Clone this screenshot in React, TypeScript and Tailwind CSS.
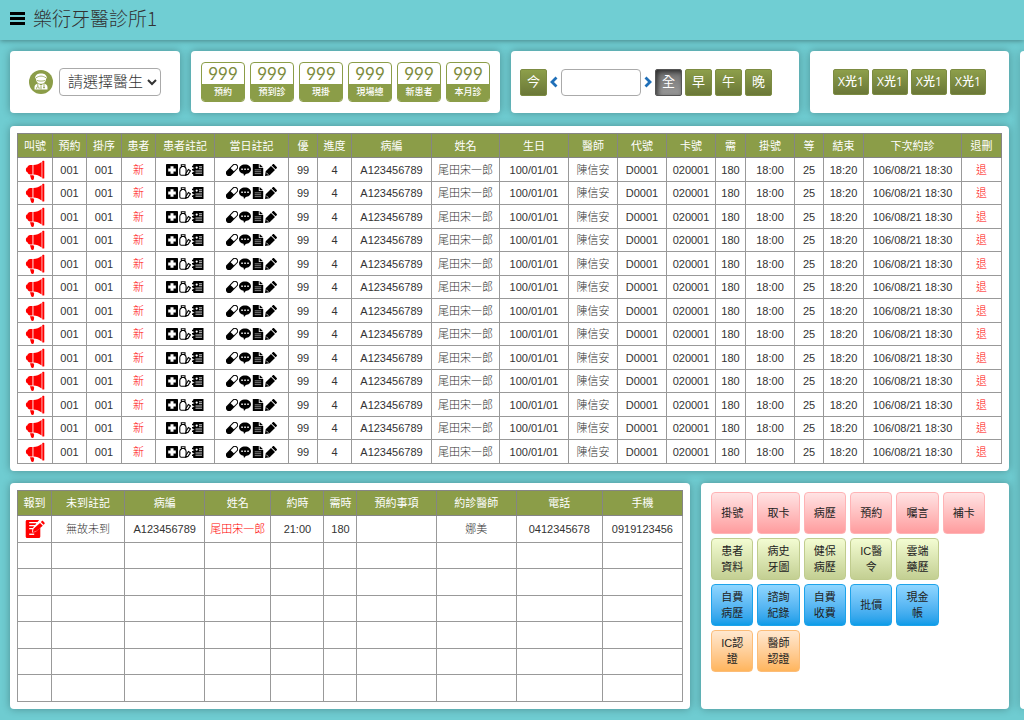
import { useState } from 'react';
import type { ReactNode } from 'react';

const stats = ['預約', '預到診', '現掛', '現場總', '新患者', '本月診'];
const periods = ['全', '早', '午', '晚'];
const xrays = [1, 2, 3, 4];

const queueColumns = [
  { label: '叫號', width: 'w-[35px]' },
  { label: '預約', width: 'w-[34px]' },
  { label: '掛序', width: 'w-[35px]' },
  { label: '患者', width: 'w-[34px]' },
  { label: '患者註記', width: 'w-[59px]' },
  { label: '當日註記', width: 'w-[74px]' },
  { label: '優', width: 'w-[29px]' },
  { label: '進度', width: 'w-[34px]' },
  { label: '病編', width: 'w-[80px]' },
  { label: '姓名', width: 'w-[68px]' },
  { label: '生日', width: 'w-[69px]' },
  { label: '醫師', width: 'w-[49px]' },
  { label: '代號', width: 'w-[49px]' },
  { label: '卡號', width: 'w-[49px]' },
  { label: '需', width: 'w-[30px]' },
  { label: '掛號', width: 'w-[49px]' },
  { label: '等', width: 'w-[29px]' },
  { label: '結束', width: 'w-[40px]' },
  { label: '下次約診', width: 'w-[98px]' },
  { label: '退刪', width: 'w-[40px]' },
];

const bookingColumns = [
  { label: '報到', width: 'w-[34px]' },
  { label: '未到註記', width: 'w-[73px]' },
  { label: '病編', width: 'w-[80px]' },
  { label: '姓名', width: 'w-[66px]' },
  { label: '約時', width: 'w-[53px]' },
  { label: '需時', width: 'w-[33px]' },
  { label: '預約事項', width: 'w-[79px]' },
  { label: '約診醫師', width: 'w-[80px]' },
  { label: '電話', width: 'w-[86px]' },
  { label: '手機', width: 'w-[80px]' },
];

const patient = {
  booking: '001',
  order: '001',
  priority: '99',
  progress: '4',
  chart: 'A123456789',
  name: '尾田宋一郎',
  birthday: '100/01/01',
  doctor: '陳信安',
  code: 'D0001',
  card: '020001',
  need: '180',
  registered: '18:00',
  wait: '25',
  end: '18:20',
  next: '106/08/21 18:30',
};

const queue = Array.from({ length: 13 }, (_, i) => ({ id: i, ...patient }));

const actionGroups = [
  {
    style: 'border-[#ffb3b5] bg-linear-to-b from-[#ffe3e4] to-[#ff9c9e]',
    items: ['掛號', '取卡', '病歷', '預約', '囑言', '補卡'],
  },
  {
    style: 'border-[#c0cc8e] bg-linear-to-b from-[#f3fcd2] to-[#c3cf92]',
    items: ['患者資料', '病史牙圖', '健保病歷', 'IC醫令', '雲端藥歷'],
  },
  {
    style: 'border-[#1ea3ea] bg-linear-to-b from-[#8fd6ff] to-[#0a9ce8]',
    items: ['自費病歷', '諮詢紀錄', '自費收費', '批價', '現金帳'],
  },
  {
    style: 'border-[#fcbd78] bg-linear-to-b from-[#ffe8d0] to-[#ffb55c]',
    items: ['IC認證', '醫師認證'],
  },
];

function Panel({ className = '', children }: { className?: string; children?: ReactNode }) {
  return <section className={`bg-white rounded shadow-[0_0_8px_rgba(0,0,0,0.3)] ${className}`}>{children}</section>;
}

function Icon({ className = 'size-3', box = 12, children }: { className?: string; box?: number; children: ReactNode }) {
  return (
    <svg viewBox={`0 0 ${box} ${box}`} className={`inline-block shrink-0 ${className}`} fill="currentColor" aria-hidden="true">
      {children}
    </svg>
  );
}

function MegaphoneIcon() {
  return (
    <Icon className="size-5" box={20}>
      <path d="M7.500 5v9.400H5.200C3.600 14.400 2.700 13.400 2.500 12.200 1.500 12 .9 11 .9 9.700s.6-2.300 1.600-2.500C2.700 6 3.600 5 5.200 5z" />
      <path d="M8.400 5c3.200 0 5.600-1 8.200-3v15.400c-2.600-2-5-3-8.200-3z" />
      <rect x="17.300" y=".8" width="2" height="17.800" rx="0.600" />
      <path d="M5 15.200h3.600v.9l.6.500-.4 2.400c-.2.700-.6 1-1.300 1s-1.200-.3-1.400-1z" />
    </Icon>
  );
}

function CheckInIcon() {
  return (
    <Icon className="size-5" box={20}>
      <path d="M2 1h12.200l-1.700 2H4.200v1.300h7.200L10.200 6H4.200v1.300h4.900L7.900 9H4.200v1.300h3.200L7 13.600l3.600-.5 4.700-4.500V17.500c0 .9-.6 1.500-1.500 1.500H2C1.300 19 .7 18.400.7 17.500v-15C.7 1.600 1.300 1 2 1z" />
      <path d="M15.800 3.100l.9-.9c.5-.5 1-.5 1.500 0l1.200 1.200c.5.500.5 1 0 1.500l-.9.900zM15 3.900l2.800 2.800-7 5.700-3 .6.700-3.200z" />
      <path d="M4.200 14.600h5v1.300h-5z" fill="#fff" />
    </Icon>
  );
}

function PatientNotes() {
  return (
    <div className="flex items-center justify-center gap-px">
      <Icon>
        <path fillRule="evenodd" d="M.8 0h10.400C11.700 0 12 .3 12 .8v10.400c0 .5-.3.800-.8.800H.8C.3 12 0 11.700 0 11.200V.8C0 .3.300 0 .8 0zM4.500 2.200v2.300H2.200v3h2.300v2.300h3V7.500h2.300v-3H7.500V2.200z" />
      </Icon>
      <Icon>
        <path d="M2.300.7h3.700v1.800H2.300zM2.700 2.700C1.500 3.300.8 4 .8 5.200v4.500c0 1 .5 1.600 1.500 1.600h3.300c1 0 1.500-.6 1.500-1.600V5.200c0-1.200-.6-1.900-1.700-2.500" fill="none" stroke="currentColor" strokeWidth="1.100" />
        <path d="M7.200 9l2.200-3.500 2 1.300-2.300 3.500-2.300 1z" fill="#fff" stroke="currentColor" strokeWidth="1.100" />
      </Icon>
      <Icon>
        <path d="M2 .1h9.500v11.800H2c-.6 0-.9-.3-.9-.9V1C1.100.4 1.400.1 2 .1z" />
        <path d="M7 2.800h3M7 4.700h3M3.500 7h6.500M3.500 9.200h6.500" stroke="#fff" strokeWidth=".8" />
        <circle cx="4.700" cy="3.600" r="1.100" fill="#fff" />
        <path d="M0 2.500h2.500M0 5.800h2.500M0 9.200h2.500" stroke="currentColor" strokeWidth="1.400" />
        <path d="M.4 4.100h1.800M.4 7.500h1.800" stroke="#fff" strokeWidth=".7" />
      </Icon>
    </div>
  );
}

function DayNotes() {
  return (
    <div className="flex items-center justify-center gap-px">
      <Icon>
        <g transform="rotate(-45 6 6)">
          <rect x="-1.300" y="2.800" width="14.600" height="6.400" rx="3.200" />
          <path d="M6.300 3.800h3.800a2.200 2.200 0 0 1 0 4.400H6.300z" fill="#fff" />
        </g>
      </Icon>
      <Icon>
        <path d="M6 .4c3.400 0 6 2.100 6 4.800S9.300 9.900 6.800 9.900L5 12 4.500 9.800C1.900 9.300 0 7.600 0 5.200 0 2.500 2.600.4 6 .4z" />
        <path d="M2.300 4.500h1.500V6H2.300zM5.300 4.500h1.500V6H5.300zM8.300 4.500h1.500V6H8.300z" fill="#fff" />
      </Icon>
      <Icon>
        <path d="M.8 0h6v4h4.400v8H.8z" />
        <path d="M7.600.1l3.500 3.200H7.600z" />
        <path d="M2.700 5.800h6.500M2.700 7.700h6.500M2.700 9.600h6.500" stroke="#fff" strokeWidth=".5" />
      </Icon>
      <Icon>
        <path d="M0 12l.7-4.700L6 2l4 4-5.300 5.300zM6.700 1.400L7.800.3c.4-.4.900-.4 1.300 0l2.600 2.600c.4.400.4.900 0 1.300l-1.100 1.100z" />
        <path d="M1.300 8.700l2 2" stroke="#fff" strokeWidth=".8" />
      </Icon>
    </div>
  );
}

function DoctorIcon() {
  return (
    <Icon className="size-6" box={24}>
      <circle cx="12" cy="12" r="12" fill="#8b9d48" />
      <path d="M6.200 8C6.200 5 8.800 3.600 12 3.600S17.800 5 17.800 8l-.8.800c0 3-2.200 5-5 5s-5-2-5-5z" fill="#fff" />
      <path d="M7 7.800c2-1.200 3.300-1.700 5-1.700s3 .5 5 1.700M8 10.500c2.300.8 5.700.8 8 0" fill="none" stroke="#8b9d48" strokeWidth=".8" />
      <path d="M5.500 19.600v-2.400c0-2 1.500-3.200 3.700-3.700l2.800 2 2.800-2c2.200.5 3.700 1.700 3.700 3.700v2.400z" fill="#fff" />
      <path d="M8.800 14v2.500M7.600 18.800v-.8c0-1.700 2.500-1.700 2.500 0v.8M12 15.800v3.600M15 14v2.500" fill="none" stroke="#8b9d48" strokeWidth=".8" />
      <circle cx="15" cy="17.400" r=".9" fill="#8b9d48" />
    </Icon>
  );
}

function Chevron({ d }: { d: string }) {
  return (
    <svg viewBox="0 0 8 12" className="w-2 h-3" fill="none" stroke="#1f6fb8" strokeWidth="2.800" aria-hidden="true">
      <path d={d} />
    </svg>
  );
}

function HeadRow({ columns, height }: { columns: { label: string; width: string }[]; height: string }) {
  return (
    <thead>
      <tr className={`bg-[#8b9d48] text-white ${height}`}>
        {columns.map((c) => (
          <th key={c.label} scope="col" className={`border border-[#858585] p-0 font-normal whitespace-nowrap ${c.width}`}>
            {c.label}
          </th>
        ))}
      </tr>
    </thead>
  );
}

function Cell({ className = '', children }: { className?: string; children?: ReactNode }) {
  return <td className={`border border-[#999] p-0 whitespace-nowrap ${className}`}>{children}</td>;
}

const greenButton = 'bg-linear-to-b from-[#8d9f4a] to-[#6b7838] border-[#7c8b42]';

export default function App() {
  const [period, setPeriod] = useState('全');
  const [date, setDate] = useState('');

  return (
    <div className="min-h-screen overflow-hidden bg-[#6fccd1] font-['Liberation_Sans','Noto_Sans_CJK_TC',sans-serif] text-[11px] leading-4 text-[#333]">
      <header className="flex h-10 items-center gap-2 bg-[#70ced3] px-[10px] pb-1 shadow-[0_1px_5px_rgba(0,0,0,0.35)]">
        <button type="button" aria-label="選單" className="flex w-[15px] flex-col gap-[2px]">
          <span className="h-[3px] bg-black" />
          <span className="h-[3px] bg-black" />
          <span className="h-[3px] bg-black" />
        </button>
        <h1 className="font-['Noto_Sans_CJK_TC',sans-serif] text-[19px] leading-6 font-light">樂衍牙醫診所1</h1>
      </header>

      <div className="flex gap-[11px] pt-[11px] pb-[11px] pl-[10px]">
        <main className="min-w-0 flex-1">
          {/* Top bar */}
          <div className="grid grid-cols-[170fr_309fr_288fr_199fr] gap-[11px]">
            <Panel className="flex h-[62px] items-center justify-center gap-[6px]">
              <DoctorIcon />
              <select
                aria-label="醫生"
                className="h-7 w-[102px] rounded border border-[#aaa] bg-white pb-1 pl-1 font-['Noto_Sans_CJK_TC',sans-serif] text-[15px] leading-5 font-light"
              >
                <option>請選擇醫生</option>
              </select>
            </Panel>

            <Panel className="flex h-[62px] items-center justify-center gap-[5px]">
              {stats.map((label) => (
                <div key={label} className="w-11 overflow-hidden rounded border border-[#8b9d48] text-center">
                  <div className="h-[21px] font-[Lato,sans-serif] text-[17px] leading-[22px] text-[#7c8b3c]">999</div>
                  <div className="h-[17px] bg-[#8b9d48] text-[9px] leading-[17px] font-medium text-white">{label}</div>
                </div>
              ))}
            </Panel>

            <Panel className="flex h-[62px] items-center gap-[3px] pl-[9px] text-[13px]">
              <button type="button" className={`size-[27px] rounded-xs border text-white ${greenButton}`}>
                今
              </button>
              <button type="button" aria-label="前一天">
                <Chevron d="M6.500 1.500 2 6l4.500 4.500" />
              </button>
              <input
                aria-label="日期"
                value={date}
                onChange={(e) => setDate(e.target.value)}
                className="h-[27px] w-20 rounded border border-[#aaa] px-1 text-xs"
              />
              <button type="button" aria-label="後一天">
                <Chevron d="M1.500 1.500 6 6l-4.500 4.500" />
              </button>
              {periods.map((p) => (
                <button
                  key={p}
                  type="button"
                  onClick={() => setPeriod(p)}
                  className={`size-[27px] rounded-xs border text-white ${
                    period === p
                      ? 'border-[#555] bg-linear-to-b from-[#707070] to-[#9a9a9a] shadow-[inset_2px_2px_5px_rgba(0,0,0,0.6)]'
                      : greenButton
                  }`}
                >
                  {p}
                </button>
              ))}
            </Panel>

            <Panel className="flex h-[62px] items-center justify-center gap-[3px] font-['Open_Sans','Noto_Sans_CJK_TC',sans-serif] text-xs font-medium">
              {xrays.map((x) => (
                <button key={x} type="button" className={`h-[26px] w-9 rounded-xs border text-white ${greenButton}`}>
                  X光1
                </button>
              ))}
            </Panel>
          </div>

          {/* Waiting list */}
          <Panel className="mt-[13px] p-[7px]">
            <table className="w-full table-fixed border-collapse text-center">
              <HeadRow columns={queueColumns} height="h-6" />
              <tbody>
                {queue.map((row) => (
                  <tr key={row.id} className="odd:h-6 even:h-[23px]">
                    <Cell>
                      <button type="button" aria-label="叫號" className="block mx-auto text-[#f00]">
                        <MegaphoneIcon />
                      </button>
                    </Cell>
                    <Cell>{row.booking}</Cell>
                    <Cell>{row.order}</Cell>
                    <Cell className="text-[#f00] font-light">新</Cell>
                    <Cell className="text-black">
                      <PatientNotes />
                    </Cell>
                    <Cell className="text-black">
                      <DayNotes />
                    </Cell>
                    <Cell>{row.priority}</Cell>
                    <Cell>{row.progress}</Cell>
                    <Cell>{row.chart}</Cell>
                    <Cell className="font-light">{row.name}</Cell>
                    <Cell>{row.birthday}</Cell>
                    <Cell className="font-light">{row.doctor}</Cell>
                    <Cell>{row.code}</Cell>
                    <Cell>{row.card}</Cell>
                    <Cell>{row.need}</Cell>
                    <Cell>{row.registered}</Cell>
                    <Cell>{row.wait}</Cell>
                    <Cell>{row.end}</Cell>
                    <Cell>{row.next}</Cell>
                    <Cell>
                      <button type="button" className="text-[#f00] font-light">
                        退
                      </button>
                    </Cell>
                  </tr>
                ))}
              </tbody>
            </table>
          </Panel>

          <div className="mt-3 grid grid-cols-[680fr_308fr] gap-[11px]">
            {/* Appointments */}
            <Panel className="p-[7px]">
              <table className="w-full table-fixed border-collapse text-center">
                <HeadRow columns={bookingColumns} height="h-[25px]" />
                <tbody>
                  <tr className="h-[27px]">
                    <Cell>
                      <button type="button" aria-label="報到" className="block mx-auto text-[#f00]">
                        <CheckInIcon />
                      </button>
                    </Cell>
                    <Cell className="font-light">無故未到</Cell>
                    <Cell>A123456789</Cell>
                    <Cell className="text-[#f00] font-light">尾田宋一郎</Cell>
                    <Cell>21:00</Cell>
                    <Cell>180</Cell>
                    <Cell />
                    <Cell className="font-light">娜美</Cell>
                    <Cell>0412345678</Cell>
                    <Cell>0919123456</Cell>
                  </tr>
                  {[1, 2, 3, 4, 5, 6].map((n) => (
                    <tr key={n} className="odd:h-[27px] even:h-[26px]">
                      {bookingColumns.map((c) => (
                        <Cell key={c.label} />
                      ))}
                    </tr>
                  ))}
                </tbody>
              </table>
            </Panel>

            {/* Shortcuts */}
            <Panel className="flex flex-col gap-1 px-[10px] py-[9px]">
              {actionGroups.map((group) => (
                <div key={group.style} className="grid w-[274px] grid-cols-6 gap-1">
                  {group.items.map((item) => (
                    <button
                      key={item}
                      type="button"
                      className={`h-[42px] rounded border px-[9px] text-center leading-4 text-[#222] ${group.style}`}
                    >
                      {item}
                    </button>
                  ))}
                </div>
              ))}
            </Panel>
          </div>
        </main>

        <aside className="w-1 shrink-0 rounded-l bg-white shadow-[0_0_8px_rgba(0,0,0,0.3)]" />
      </div>
    </div>
  );
}
